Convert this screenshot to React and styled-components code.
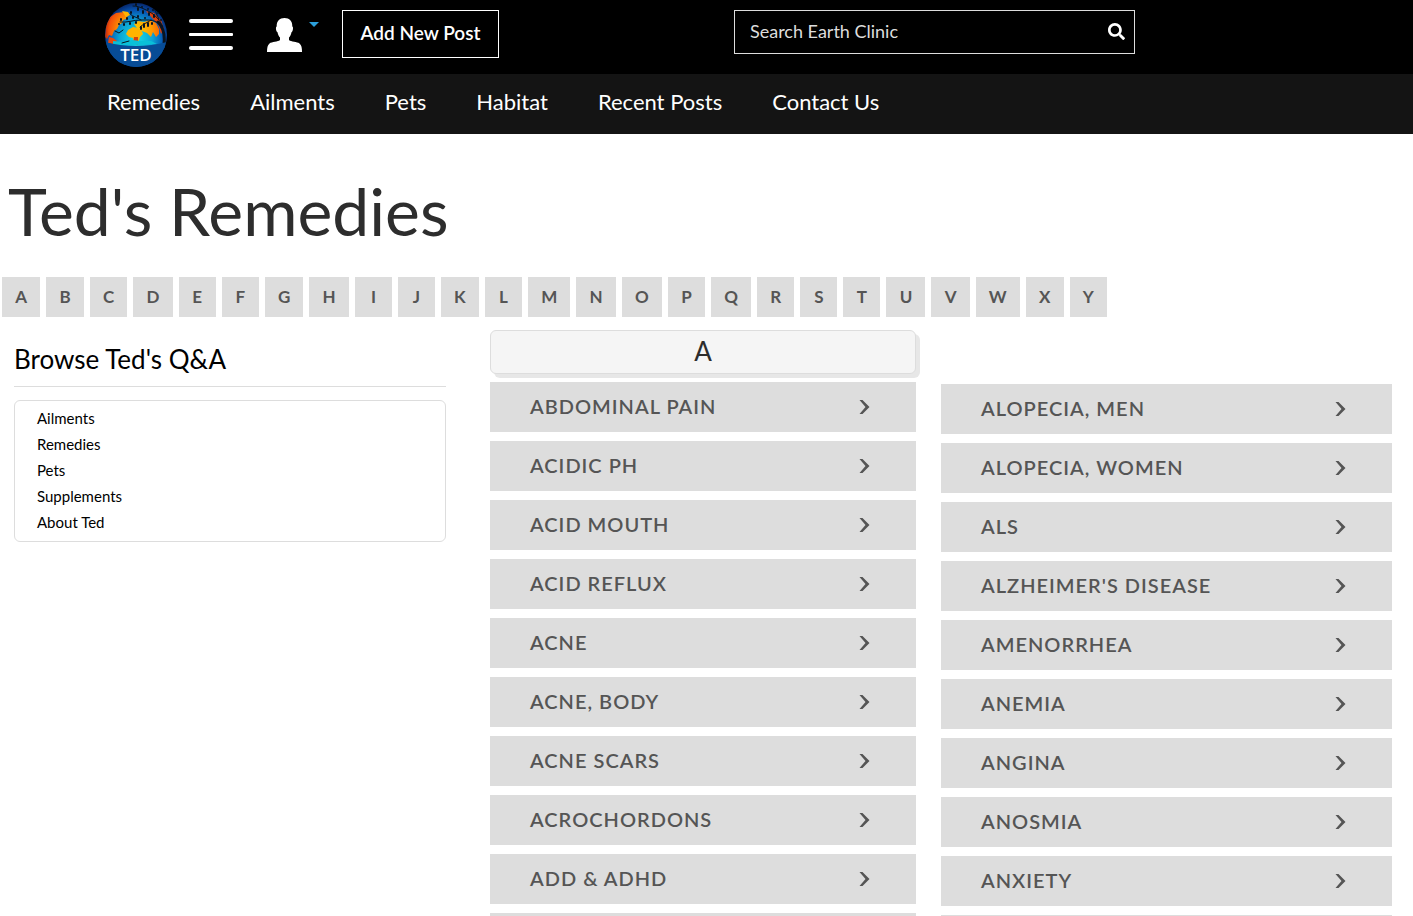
import React, { useState } from "react";
import styled, { createGlobalStyle } from "styled-components";
import { FaSearch } from "react-icons/fa";

const GlobalStyle = createGlobalStyle`
  * {
    box-sizing: border-box;
  }
  body {
    margin: 0;
    background: #fff;
    color: #000;
    font-family: "Lato", "Open Sans", sans-serif;
  }
  a {
    color: inherit;
    text-decoration: none;
  }
  ul {
    margin: 0;
    padding: 0;
    list-style: none;
  }
`;

const TopBar = styled.header`
  background: #000;
`;

const TopInner = styled.div`
  max-width: 1203px;
  height: 74px;
  margin: 0 auto;
  display: grid;
  grid-template-columns: 629fr 401fr 173fr;
  align-items: start;
`;

const Tools = styled.div`
  display: flex;
  align-items: flex-start;
`;

const LogoLink = styled.a`
  display: block;
  height: 64px;
  margin-top: 3px;
`;

const IconButton = styled.button`
  display: flex;
  padding: 0;
  border: 0;
  background: none;
  color: #fff;
  cursor: pointer;
  margin: 18px 0 0 ${(props) => props.$left}px;
`;

const PostButton = styled.button`
  height: 48px;
  width: 157px;
  margin: 10px 0 0 23px;
  padding: 0 0 4px;
  border: 1px solid #fff;
  background: #000;
  color: #fff;
  font-family: inherit;
  font-size: 19px;
  font-weight: 600;
  cursor: pointer;
`;

const SearchForm = styled.form`
  display: flex;
  height: 44px;
  margin-top: 10px;
  border: 1px solid #ddd;
`;

const SearchInput = styled.input`
  flex: 1;
  min-width: 0;
  padding: 0 0 2px 15px;
  border: 0;
  outline: 0;
  background: transparent;
  color: #ddd;
  font-family: inherit;
  font-size: 18px;
  &::placeholder {
    color: #ddd;
    opacity: 1;
  }
`;

const SearchButton = styled.button`
  display: flex;
  align-items: center;
  justify-content: center;
  width: 36px;
  padding: 0 0 2px;
  border: 0;
  background: none;
  color: #fff;
  font-size: 17px;
  cursor: pointer;
`;

const NavBar = styled.nav`
  background: #141414;
`;

const NavList = styled.ul`
  max-width: 1203px;
  height: 60px;
  margin: 0 auto;
  padding: 0 2px 5px;
  display: flex;
  align-items: center;
  gap: 50px;
  color: #fff;
  font-size: 22px;
  line-height: 28px;
`;

const Title = styled.h1`
  margin: 0;
  padding: 37px 8px 26px;
  color: #2d2d2d;
  font-size: 66px;
  line-height: 80px;
  font-weight: 400;
`;

const Letters = styled.nav`
  display: flex;
  gap: 6px;
  max-width: 1107px;
  padding-left: 2px;
`;

const LetterLink = styled.a`
  flex: 1 1 auto;
  min-width: 37px;
  padding: 0 12px;
  background: #ddd;
  color: #555;
  font-size: 17px;
  line-height: 40px;
  font-weight: 700;
  text-align: center;
`;

const Columns = styled.main`
  display: grid;
  grid-template-columns: 451fr 426fr 451fr;
  column-gap: 25px;
  padding: 13px 21px 0 14px;
`;

const Sidebar = styled.aside`
  padding-right: 19px;
`;

const SideTitle = styled.h2`
  margin: 0 0 13px;
  padding: 14px 0 12px;
  border-bottom: 1px solid #ddd;
  font-size: 26px;
  line-height: 30px;
  font-weight: 400;
`;

const SideList = styled.ul`
  padding: 4px 22px 6px;
  border: 1px solid #ddd;
  border-radius: 6px;
  font-size: 15px;
  line-height: 26px;
`;

const SectionTitle = styled.h2`
  height: 44px;
  margin: 0 0 8px;
  border: 1px solid #ddd;
  border-radius: 6px;
  background: #f5f5f5;
  box-shadow: 4px 4px 0 #e7e7e7;
  color: #2d2d2d;
  font-size: 26px;
  line-height: 40px;
  font-weight: 400;
  text-align: center;
`;

const RemedyList = styled.ul`
  display: flex;
  flex-direction: column;
  gap: 9px;
  padding-top: ${(props) => props.$top || 0}px;
`;

const RemedyLink = styled.a`
  display: flex;
  align-items: center;
  justify-content: space-between;
  height: 50px;
  padding: 0 46px 0 40px;
  background: #ddd;
  color: #555;
`;

const RemedyName = styled.span`
  padding-bottom: 3px;
  font-size: 20px;
  line-height: 24px;
  font-weight: 600;
  letter-spacing: 1px;
  text-transform: uppercase;
`;

const navItems = ["Remedies", "Ailments", "Pets", "Habitat", "Recent Posts", "Contact Us"];

const sideItems = ["Ailments", "Remedies", "Pets", "Supplements", "About Ted"];

const letters = "ABCDEFGHIJKLMNOPQRSTUVWXY".split("");

const firstColumn = [
  "Abdominal Pain",
  "Acidic pH",
  "Acid Mouth",
  "Acid Reflux",
  "Acne",
  "Acne, Body",
  "Acne Scars",
  "Acrochordons",
  "ADD & ADHD",
  "Adrenal Fatigue",
];

const secondColumn = [
  "Alopecia, Men",
  "Alopecia, Women",
  "ALS",
  "Alzheimer's Disease",
  "Amenorrhea",
  "Anemia",
  "Angina",
  "Anosmia",
  "Anxiety",
  "Arthritis",
];

const Logo = () => (
  <svg width="62" height="64" viewBox="0 0 62 64" role="img" aria-label="Ted">
    <defs>
      <radialGradient id="sea" cx="0.5" cy="0.55" r="0.54">
        <stop offset="0" stopColor="#19e0e4" />
        <stop offset="0.5" stopColor="#0ba3d4" />
        <stop offset="0.8" stopColor="#0757b4" />
        <stop offset="1" stopColor="#062a70" />
      </radialGradient>
      <radialGradient id="land" gradientUnits="userSpaceOnUse" cx="31" cy="28" r="32">
        <stop offset="0" stopColor="#ffd000" />
        <stop offset="0.5" stopColor="#ff9a00" />
        <stop offset="0.85" stopColor="#f4500a" />
        <stop offset="1" stopColor="#a82208" />
      </radialGradient>
      <clipPath id="globe">
        <ellipse cx="31" cy="32" rx="31" ry="32" />
      </clipPath>
    </defs>
    <g clipPath="url(#globe)">
      <rect width="62" height="64" fill="url(#sea)" />
      <path
        d="M1 22L5 14L11 10L19 9L23 12L21 16L18 17L17 20L14 22L12 26L9 28L7 33L4 32L2 36L0 34Z"
        fill="url(#land)"
      />
      <path d="M4 34L8 35L12 38L11 42L3 40Z" fill="#e8480c" />
      <path d="M17 8L23 9L25 12L21 14Z" fill="#ffb400" />
      <path
        d="M23 27L28 24L33 25L37 28L38 31L35 34L33 41L29 40L28 35L24 34L21 31Z"
        fill="#ffb400"
      />
      <path
        d="M29 21L33 18L39 19L45 17L51 20L54 26L54 31L51 34L48 29L46 34L42 30L37 28L32 25Z"
        fill="url(#land)"
      />
      <path d="M41 8L49 10L56 17L59 26L56 31L53 21L47 15Z" fill="#e2400a" />
      <path d="M29 34L33 34L33 42H28Z" fill="#d8400c" />
      <path d="M8 38L20 39L27 37L36 38L46 38L52 41L8 43Z" fill="#0ac0d8" />
      <g fill="none" stroke="#091420" strokeLinecap="round">
        <path d="M59 41C60 32 58 24 53 19" strokeWidth="3" />
        <path d="M57 24C51 16 44 17 36 17C28 17 22 20 15 19" strokeWidth="1" />
        <path d="M58 24C54 14 46 9 39 6C35 4 32 3 28 3" strokeWidth="1" />
        <path d="M46 17C42 20 38 21 35 24M36 17C32 14 28 14 25 11M54 16C51 12 52 9 49 6" strokeWidth="1" />
        <path
          d="M16 16V17M19 21V22M22 15V16M25 20V21M26 9V10M28 14V15M31 19V20M33 13V14M36 24V26M39 21V24M43 20V23M40 15V15M47 20V21M14 21V21M33 5V7M37 4V4M38 8V10M43 6V6M44 10V12M48 7V7M49 12V14M53 10V10M31 1V2M56 17V17"
          strokeWidth="2"
        />
        <path d="M10 28L14 30L18 27M17 40L24 38" strokeWidth="1" />
      </g>
      <path d="M0 39Q31 47 62 39V64H0Z" fill="#074c96" />
    </g>
    <text
      x="31"
      y="58"
      textAnchor="middle"
      fill="#fff"
      fontFamily="Open Sans, sans-serif"
      fontSize="17"
      fontWeight="600"
    >
      TED
    </text>
  </svg>
);

const MenuIcon = () => (
  <svg width="44" height="32" viewBox="0 0 44 32" fill="#fff" aria-hidden="true">
    <rect y="1" width="44" height="4" rx="2" />
    <rect y="15" width="44" height="3" rx="1" />
    <rect y="28" width="44" height="4" rx="2" />
  </svg>
);

const UserIcon = () => (
  <svg width="52" height="34" viewBox="0 0 52 34" aria-hidden="true">
    <path
      d="M17.5 0C12.5 0 9.5 3 9.7 8.5C8.5 8.5 8.8 13.5 10.5 14.2C11 17 12 18.5 13 19.5V22C11 24 5 23.5 2.5 25.500C0.500 27 0 30 0 34H35C35 30 34.500 27 32.500 25.500C30 23.500 24 24 22 22V19.500C23 18.500 24 17 24.500 14.200C26.200 13.500 26.500 8.500 25.300 8.500C25.500 3 22.500 0 17.500 0Z"
      fill="#fff"
    />
    <path d="M42 4H52L47 9Z" fill="#2b9fda" />
  </svg>
);

const Chevron = () => (
  <svg width="11" height="14" viewBox="0 0 11 14" aria-hidden="true">
    <path d="M0.500 0H3.500L10.500 7L3.500 14H0.500L6.500 7Z" fill="#555" />
  </svg>
);

const Remedies = ({ items, top }) => (
  <RemedyList $top={top}>
    {items.map((item) => (
      <li key={item}>
        <RemedyLink href="#">
          <RemedyName>{item}</RemedyName>
          <Chevron />
        </RemedyLink>
      </li>
    ))}
  </RemedyList>
);

const App = () => {
  const [query, setQuery] = useState("");

  return (
    <>
      <GlobalStyle />
      <TopBar>
        <TopInner>
          <Tools>
            <LogoLink href="#">
              <Logo />
            </LogoLink>
            <IconButton $left={22} aria-label="Menu">
              <MenuIcon />
            </IconButton>
            <IconButton $left={34} aria-label="Account">
              <UserIcon />
            </IconButton>
            <PostButton>Add New Post</PostButton>
          </Tools>
          <SearchForm onSubmit={(e) => e.preventDefault()}>
            <SearchInput
              aria-label="Search Earth Clinic"
              placeholder="Search Earth Clinic"
              value={query}
              onChange={(e) => setQuery(e.target.value)}
            />
            <SearchButton aria-label="Search">
              <FaSearch />
            </SearchButton>
          </SearchForm>
        </TopInner>
      </TopBar>
      <NavBar>
        <NavList>
          {navItems.map((item) => (
            <li key={item}>
              <a href="#">{item}</a>
            </li>
          ))}
        </NavList>
      </NavBar>
      <Title>Ted's Remedies</Title>
      <Letters>
        {letters.map((letter) => (
          <LetterLink key={letter} href="#">
            {letter}
          </LetterLink>
        ))}
      </Letters>
      <Columns>
        <Sidebar>
          <SideTitle>Browse Ted's Q&A</SideTitle>
          <SideList>
            {sideItems.map((item) => (
              <li key={item}>
                <a href="#">{item}</a>
              </li>
            ))}
          </SideList>
        </Sidebar>
        <section>
          <SectionTitle>A</SectionTitle>
          <Remedies items={firstColumn} />
        </section>
        <Remedies items={secondColumn} top={54} />
      </Columns>
    </>
  );
};

export default App;
